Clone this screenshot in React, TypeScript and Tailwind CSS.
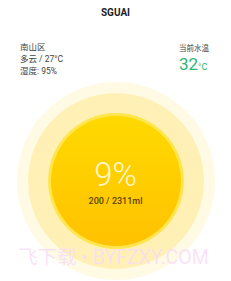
import React from 'react';

const font = { fontFamily: 'Roboto, "Noto Sans CJK SC", sans-serif' };

const WaterCircle: React.FC<{ percent: number; drunk: number; goal: number }> = ({ percent, drunk, goal }) => {
  return (
    <div className="mx-auto mt-[5px] flex h-[198px] w-[198px] items-center justify-center rounded-full bg-[#fffae4]">
      <div className="flex h-[176px] w-[176px] items-center justify-center rounded-full bg-[#fff1b6]">
        <div className="flex h-[136px] w-[136px] items-center justify-center rounded-full bg-[#ffe54f]">
          <div className="flex h-[130px] w-[130px] flex-col items-center rounded-full bg-gradient-to-b from-[#ffd900] to-[#ffc200]">
            <div className="mt-[41px] text-[33px] font-light leading-[36px] text-[#fff6cf]">{percent}%</div>
            <div className="mt-[2px] text-[9px] font-medium leading-[12px] text-[#5b4400]">
              {drunk} / {goal}ml
            </div>
          </div>
        </div>
      </div>
    </div>
  );
};

export default function App() {
  return (
    <div className="relative h-[281px] w-[231px] overflow-hidden bg-white" style={font}>
      <header className="flex h-[24px] items-center justify-center text-[10px] font-bold text-[#222]">
        SGUAI
      </header>

      <div className="mt-[17px] flex items-start justify-between pl-[20px] pr-[22px]">
        <div className="text-[8.5px] leading-[12px] text-[#444]">
          <div>南山区</div>
          <div>多云 / 27°C</div>
          <div>湿度: 95%</div>
        </div>
        <div className="flex flex-col items-start pt-[2px]">
          <div className="text-[7.5px] leading-[12px] text-[#444]">当前水温</div>
          <div className="flex items-baseline text-[#2bb673]">
            <span className="text-[17px] leading-[18px]">32</span>
            <span className="text-[9px]">°C</span>
          </div>
        </div>
      </div>

      <WaterCircle percent={9} drunk={200} goal={2311} />

      <div className="pointer-events-none absolute left-[18px] top-[247px] whitespace-nowrap text-[19.5px] leading-[22px] text-[#f7dcf6]/80">
        飞下载 • BYFZXY.COM
      </div>
    </div>
  );
}
